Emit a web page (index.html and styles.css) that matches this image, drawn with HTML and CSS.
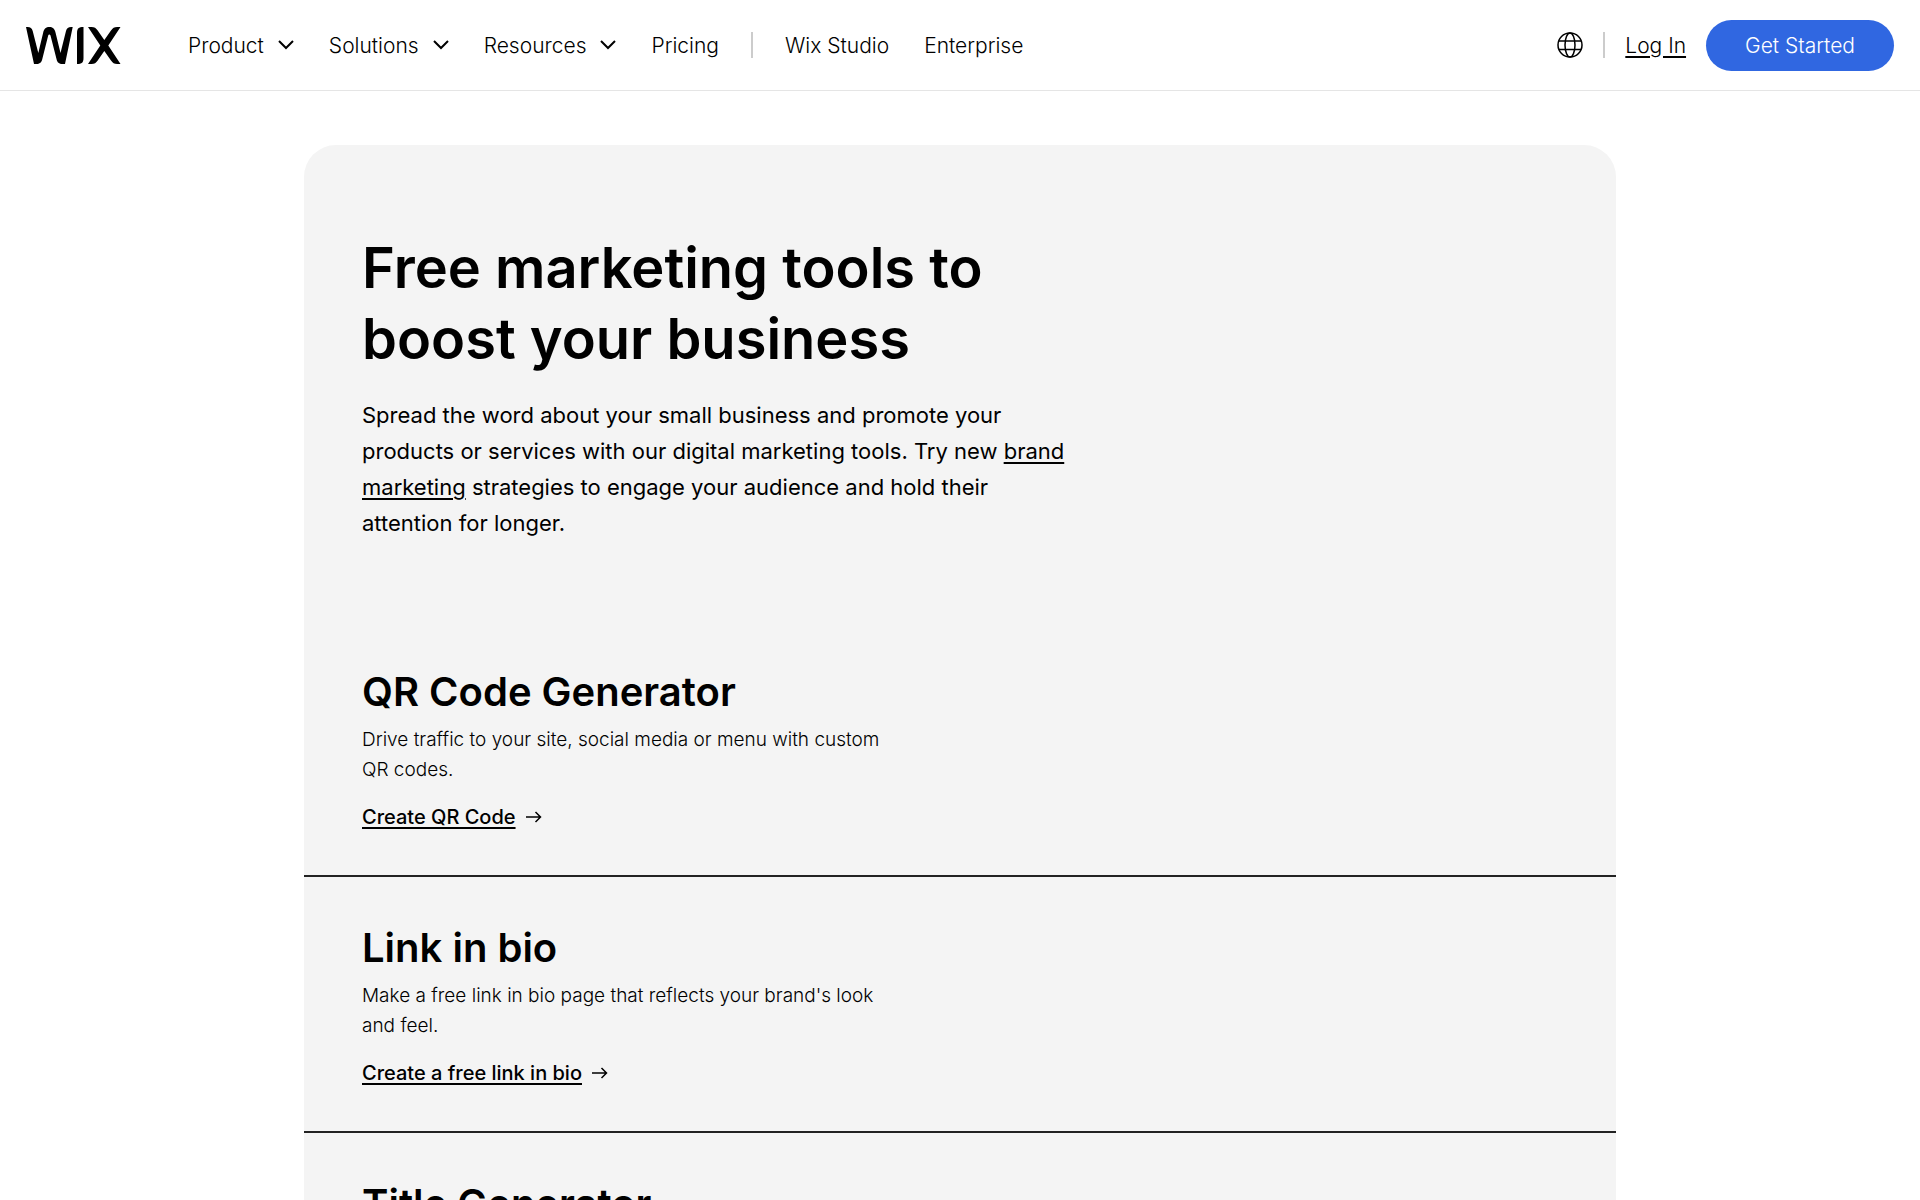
FILE: index.html
```html
<!DOCTYPE html>
<html lang="en">
<head>
    <meta charset="UTF-8">
    <meta name="viewport" content="width=device-width, initial-scale=1">
    <title>Free Marketing Tools | Wix</title>
    <link rel="stylesheet" href="styles.css">
</head>
<body>
<header class="header">
    <a class="logo" href="#" aria-label="Wix">
        <svg width="95" height="37" viewBox="0 0 95 37">
            <path d="M0 0H1.500C4.500 0 6 1.200 6.700 4L12.300 26L17.200 5.500C18.200 1.500 20 0 23.300 0S28.500 1.500 29.500 5.500L34.500 26L40 4C40.700 1.200 42.200 0 45.200 0H46.700L39 37H36.500C33 37 31.300 35.600 30.500 32L24.500 8.500C24.200 7.200 22.500 7.200 22.200 8.500L16.300 32C15.500 35.600 13.800 37 10.300 37H8Z"/>
            <path d="M57.500 0V31C57.500 35.500 55.800 37 51 37V6C51 1.500 52.700 0 57.500 0Z"/>
            <path d="M62 0H65.500C68.500 0 70 1 71.700 3.500L78.300 13L85 3.500C86.700 1 88.200 0 91.200 0H94.500L82.300 18.500L94.500 37H91.200C88.200 37 86.700 36 85 33.500L78.300 24L71.700 33.500C70 36 68.500 37 65.500 37H62L74.300 18.500Z"/>
        </svg>
    </a>
    <nav class="nav">
        <button class="nav-item" type="button">Product
            <svg class="chevron" width="16" height="10" viewBox="0 0 16 10"><path d="M1 1l7 7 7-7"/></svg>
        </button>
        <button class="nav-item" type="button">Solutions
            <svg class="chevron" width="16" height="10" viewBox="0 0 16 10"><path d="M1 1l7 7 7-7"/></svg>
        </button>
        <button class="nav-item" type="button">Resources
            <svg class="chevron" width="16" height="10" viewBox="0 0 16 10"><path d="M1 1l7 7 7-7"/></svg>
        </button>
        <a class="nav-item" href="#">Pricing</a>
        <span class="divider"></span>
        <a class="nav-item" href="#">Wix Studio</a>
        <a class="nav-item" href="#">Enterprise</a>
    </nav>
    <div class="account">
        <button class="language" type="button" aria-label="Language">
            <svg width="26" height="26" viewBox="0 0 26 26">
                <circle cx="13" cy="13" r="12"/>
                <ellipse cx="13" cy="13" rx="5" ry="12"/>
                <path d="M2 9h22M2 17.500h22"/>
            </svg>
        </button>
        <span class="divider"></span>
        <a class="login" href="#">Log In</a>
        <a class="start" href="#">Get Started</a>
    </div>
</header>
<main class="card">
    <section class="hero">
        <h1>Free marketing tools to boost your business</h1>
        <p>Spread the word about your small business and promote your products or services with our digital marketing tools. Try new <a href="#">brand marketing</a> strategies to engage your audience and hold their attention for longer.</p>
    </section>
    <section class="tool">
        <h2>QR Code Generator</h2>
        <p>Drive traffic to your site, social media or menu with custom QR codes.</p>
        <a class="tool-link" href="#"><span>Create QR Code</span>
            <svg class="arrow" width="16" height="12" viewBox="0 0 16 12"><path d="M0 6h15M9.500 1l5 5-5 5"/></svg>
        </a>
    </section>
    <section class="tool">
        <h2>Link in bio</h2>
        <p>Make a free link in bio page that reflects your brand's look and feel.</p>
        <a class="tool-link" href="#"><span>Create a free link in bio</span>
            <svg class="arrow" width="16" height="12" viewBox="0 0 16 12"><path d="M0 6h15M9.500 1l5 5-5 5"/></svg>
        </a>
    </section>
    <section class="tool">
        <h2>Title Generator</h2>
    </section>
</main>
</body>
</html>
```
FILE: styles.css
```css
* {
    box-sizing: border-box;
    margin: 0;
    padding: 0;
}

body {
    height: 100vh;
    overflow: hidden;
    font-family: Inter, "Liberation Sans", sans-serif;
    color: #000;
    background-color: #fff;
}

a {
    color: inherit;
}

button {
    border: 0;
    background: none;
    font: inherit;
    color: inherit;
    cursor: pointer;
}

svg {
    display: block;
}

/* top bar */
.header {
    display: flex;
    align-items: center;
    height: 91px;
    padding: 0 26px;
    border-bottom: 1px solid #e5e5e5;
    font-size: 21px;
    font-weight: 300;
}

.logo {
    margin-right: 67px;
}

.nav {
    display: flex;
    align-items: center;
    gap: 35px;
}

.nav-item {
    display: flex;
    align-items: center;
    gap: 14px;
    text-decoration: none;
    white-space: nowrap;
}

.chevron {
    fill: none;
    stroke: #000;
    stroke-width: 2;
}

.divider {
    width: 2px;
    height: 26px;
    background-color: #ccc;
}

.nav .divider {
    margin: 0 -3px;
}

.account {
    display: flex;
    align-items: center;
    gap: 20px;
    margin-left: auto;
}

.language svg {
    fill: none;
    stroke: #000;
    stroke-width: 1.5;
}

.login {
    text-decoration-thickness: 2px;
    text-underline-offset: 3px;
}

.start {
    padding: 0 39px;
    border-radius: 26px;
    line-height: 51px;
    color: #fff;
    background-color: #3067e1;
    text-decoration: none;
}

/* grey card with the list of tools */
.card {
    max-width: 1312px;
    margin: 54px auto 0;
    border-radius: 32px 32px 0 0;
    background-color: #f4f4f4;
}

.hero {
    padding: 88px 58px 80px;
}

.hero h1 {
    max-width: 720px;
    margin-bottom: 22px;
    font-size: 56px;
    font-weight: 600;
    line-height: 71px;
}

.hero p {
    max-width: 720px;
    font-size: 22px;
    line-height: 36px;
}

.hero a {
    text-decoration-thickness: 2px;
    text-underline-offset: 3px;
}

.tool {
    display: flex;
    flex-direction: column;
    align-items: flex-start;
    padding: 46px 58px 42px;
    border-bottom: 2px solid #222;
}

.tool h2 {
    margin-bottom: 8px;
    font-size: 40px;
    font-weight: 600;
    line-height: 50px;
}

.tool p {
    max-width: 530px;
    margin-bottom: 16px;
    font-size: 19px;
    font-weight: 300;
    line-height: 30px;
}

.tool-link {
    display: flex;
    align-items: center;
    gap: 10px;
    font-size: 20px;
    font-weight: 500;
    line-height: 32px;
    text-decoration: none;
}

.tool-link span {
    text-decoration: underline;
    text-decoration-thickness: 2px;
    text-underline-offset: 3px;
}

.arrow {
    fill: none;
    stroke: #000;
    stroke-width: 1.5;
}
```
